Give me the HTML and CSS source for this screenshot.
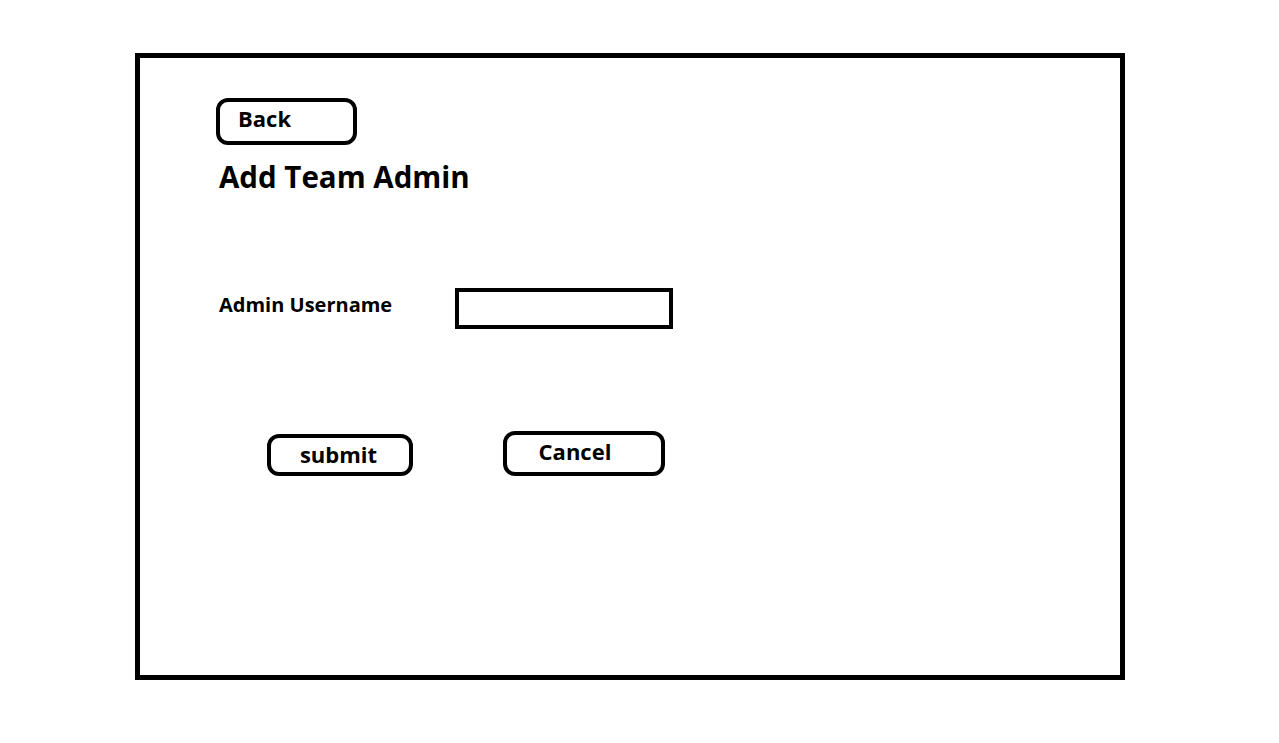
FILE: index.html
```html
<!DOCTYPE html>
<html lang="en">
<head>
<meta charset="utf-8">
<title>Add Team Admin</title>
<link rel="stylesheet" href="styles.css">
</head>
<body>
<div class="frame">
  <button class="btn btn-back" type="button">Back</button>
  <h1 class="title">Add Team Admin</h1>
  <div class="field">
    <label class="label" for="username">Admin Username</label>
    <input class="input" id="username" type="text">
  </div>
  <div class="actions">
    <button class="btn btn-submit" type="submit">submit</button>
    <button class="btn btn-cancel" type="button">Cancel</button>
  </div>
</div>
</body>
</html>
```

FILE: styles.css
```css
html, body {
  margin: 0;
  padding: 0;
  background: #ffffff;
}

body {
  font-family: "Open Sans", "DejaVu Sans", sans-serif;
  color: #000000;
}

.frame {
  box-sizing: border-box;
  width: 990px;
  height: 627px;
  margin: 53px 0 0 135px;
  border: 5px solid #000000;
  padding: 40px 0 0 76px;
  display: flex;
  flex-direction: column;
  align-items: flex-start;
}

.btn {
  box-sizing: border-box;
  background: #ffffff;
  border: 4px solid #000000;
  border-radius: 12px;
  font-family: "Open Sans", "DejaVu Sans", sans-serif;
  font-weight: 700;
  color: #000000;
  padding: 0;
  cursor: pointer;
  display: flex;
  align-items: center;
}

.btn-back {
  width: 141px;
  height: 47px;
  font-size: 22px;
  padding: 0 0 8px 18px;
  justify-content: flex-start;
}

.title {
  margin: 12px 0 0 3px;
  font-size: 29.5px;
  font-weight: 700;
  line-height: 40px;
}

.field {
  display: flex;
  align-items: flex-start;
  margin: 91px 0 0 3px;
}

.label {
  width: 236px;
  margin-top: 3px;
  font-size: 20px;
  font-weight: 700;
}

.input {
  box-sizing: border-box;
  width: 218px;
  height: 41px;
  border: 4px solid #000000;
  border-radius: 0;
  margin: 0;
  padding: 0 6px;
  font-size: 18px;
  outline: none;
}

.actions {
  display: flex;
  align-items: flex-end;
  margin: 102px 0 0 51px;
  gap: 90px;
}

.btn-submit {
  width: 146px;
  height: 42px;
  font-size: 22px;
  justify-content: center;
  padding: 0 3px 2px 0;
}

.btn-cancel {
  width: 162px;
  height: 45px;
  font-size: 22px;
  justify-content: center;
  padding: 0 18px 6px 0;
}
```
